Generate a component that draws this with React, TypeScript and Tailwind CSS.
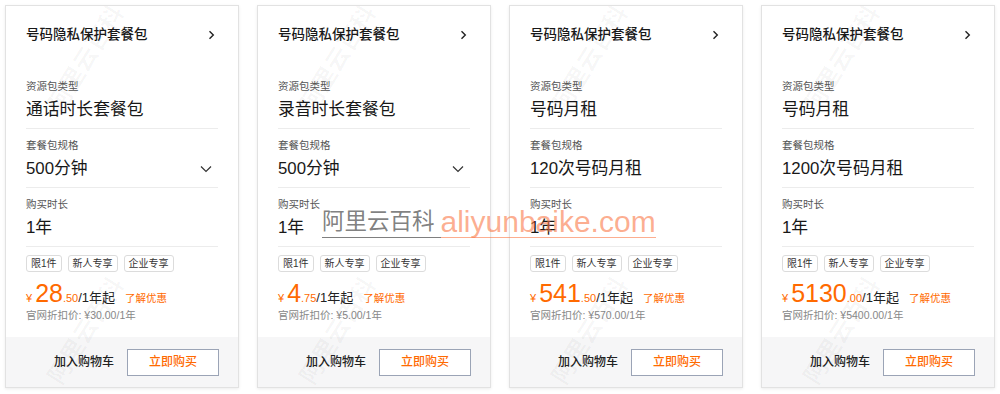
import React from "react";

type Card = {
  type: string;
  spec: string;
  dropdown: boolean;
  price: string;
  dec: string;
  orig: string;
};

const cards: Card[] = [
  { type: "通话时长套餐包", spec: "500分钟", dropdown: true, price: "28", dec: ".50", orig: "¥30.00/1年" },
  { type: "录音时长套餐包", spec: "500分钟", dropdown: true, price: "4", dec: ".75", orig: "¥5.00/1年" },
  { type: "号码月租", spec: "120次号码月租", dropdown: false, price: "541", dec: ".50", orig: "¥570.00/1年" },
  { type: "号码月租", spec: "1200次号码月租", dropdown: false, price: "5130", dec: ".00", orig: "¥5400.00/1年" },
];

const font = { fontFamily: '"Liberation Sans", "Noto Sans CJK SC", sans-serif' };

function Section({ label, value, right }: { label: string; value: string; right?: React.ReactNode }) {
  return (
    <div className="pt-[9px] pb-[7px] border-b border-[#ececec]">
      <div className="text-[10.5px] leading-[14px] text-[#555]">{label}</div>
      <div className="mt-[6px] flex items-center justify-between h-[22px]">
        <span className="text-[16.8px] leading-[22px] text-[#181818]">{value}</span>
        {right}
      </div>
    </div>
  );
}

function Diag({ x, y }: { x: number; y: number }) {
  return (
    <div
      className="pointer-events-none absolute w-0 h-0 flex items-center justify-center"
      style={{ left: x, top: y }}
    >
      <span className="-rotate-[58deg] text-[24px] font-bold text-[rgba(0,0,0,0.035)] whitespace-nowrap">
        阿里云百科
      </span>
    </div>
  );
}

function ProductCard({ c }: { c: Card }) {
  return (
    <div className="relative w-[234px] h-[383px] border border-[#e2e2e2] bg-white shadow-[0_1px_3px_rgba(0,0,0,0.08)] flex flex-col overflow-hidden">
      <div className="flex-1 px-[20px]">
        <div className="h-[64px] pt-[20px]">
          <div className="flex items-center justify-between h-[18px]">
            <span className="text-[13.5px] leading-[18px] font-medium text-[#181818]">号码隐私保护套餐包</span>
            <svg width="7" height="10" viewBox="0 0 7 10" className="mr-[3px]">
              <path d="M1.5 1.2 L5.3 5 L1.5 8.8" fill="none" stroke="#222" strokeWidth="1.4" />
            </svg>
          </div>
        </div>
        <Section label="资源包类型" value={c.type} />
        <Section
          label="套餐包规格"
          value={c.spec}
          right={
            c.dropdown ? (
              <svg width="12" height="8" viewBox="0 0 12 8" className="mr-[6px]">
                <path d="M1 1.5 L6 6.5 L11 1.5" fill="none" stroke="#333" strokeWidth="1.2" />
              </svg>
            ) : null
          }
        />
        <Section label="购买时长" value="1年" />
        <div className="mt-[8px] flex gap-[6px]">
          {["限1件", "新人专享", "企业专享"].map((t) => (
            <span
              key={t}
              className="h-[17px] px-[4px] border border-[#dcdcdc] rounded-[3px] text-[10px] leading-[15px] text-[#333]"
            >
              {t}
            </span>
          ))}
        </div>
        <div className="mt-[7px] flex items-baseline h-[28px]">
          <span className="text-[11px] text-[#ff6a00] mr-[3px]">¥</span>
          <span className="text-[25px] leading-[28px] text-[#ff6a00]">{c.price}</span>
          <span className="text-[11px] text-[#ff6a00]">{c.dec}</span>
          <span className="text-[13px] text-[#222]">/1年起</span>
          <span className="ml-[10px] text-[10.5px] text-[#ff6a00]">了解优惠</span>
        </div>
        <div className="mt-[1px] text-[10.5px] leading-[14px] text-[#888]">官网折扣价: {c.orig}</div>
      </div>
      <div className="h-[50px] bg-[#f6f6f7] flex items-center justify-end gap-[13px] pr-[19px]">
        <span className="text-[12px] font-medium text-[#222]">加入购物车</span>
        <button className="w-[92px] h-[27px] border border-[#9ba4b6] bg-white text-[12px] font-medium text-[#ff6a00]">
          立即购买
        </button>
      </div>
      <Diag x={80} y={53} />
      <Diag x={80} y={325} />
    </div>
  );
}

export default function App() {
  return (
    <div className="relative w-[1000px] h-[394px] bg-white" style={font}>
      <div className="flex gap-[18px] pl-[5px] pt-[5px]">
        {cards.map((c, i) => (
          <ProductCard key={i} c={c} />
        ))}
      </div>
      <div className="pointer-events-none absolute left-[322px] top-[206px] flex items-end">
        <span className="text-[22.5px] leading-[31px] text-[rgba(95,95,95,0.8)] border-b-[1.5px] border-[rgba(95,95,95,0.8)] pr-[6px]">
          阿里云百科
        </span>
        <span className="text-[30px] leading-[31px] text-[rgba(250,120,70,0.6)] border-b-[1.5px] border-[rgba(250,120,70,0.6)]">
          aliyunbaike.com
        </span>
      </div>
    </div>
  );
}
